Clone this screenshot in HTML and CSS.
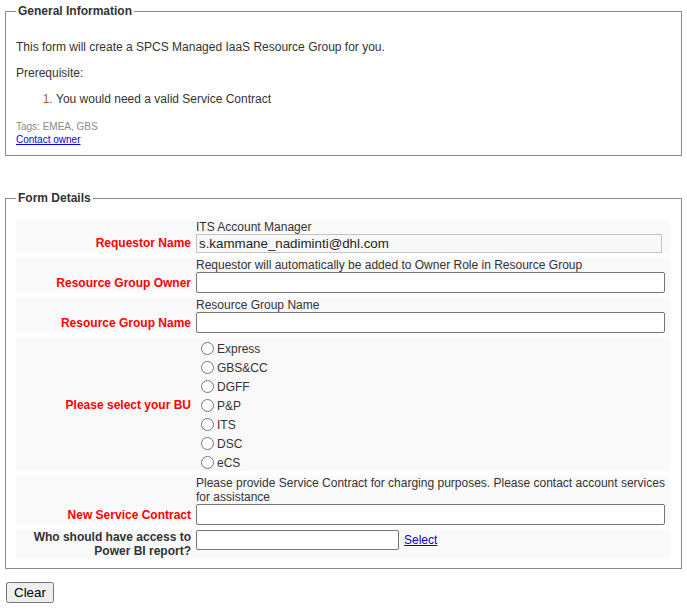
FILE: index.html
```html
<!DOCTYPE html>
<html>
<head>
<meta charset="utf-8">
<title>SPCS Managed IaaS Resource Group</title>
<link rel="stylesheet" href="styles.css">
</head>
<body>
<fieldset class="box box-info">
  <legend>General Information</legend>
  <p>This form will create a SPCS Managed IaaS Resource Group for you.</p>
  <p>Prerequisite:</p>
  <ol class="prereq">
    <li>You would need a valid Service Contract</li>
  </ol>
  <div class="tags">Tags: EMEA, GBS</div>
  <div class="contact"><a href="#">Contact owner</a></div>
</fieldset>

<fieldset class="box box-form">
  <legend>Form Details</legend>
  <div class="rows">
    <div class="row">
      <div class="lbl lbl-end"><span class="req lh19">Requestor Name</span></div>
      <div class="val">
        <div class="desc">ITS Account Manager</div>
        <input class="field field-ro" type="text" value="s.kammane_nadiminti@dhl.com" readonly>
      </div>
    </div>
    <div class="row">
      <div class="lbl lbl-end"><span class="req lh21">Resource Group Owner</span></div>
      <div class="val">
        <div class="desc">Requestor will automatically be added to Owner Role in Resource Group</div>
        <input class="field" type="text">
      </div>
    </div>
    <div class="row">
      <div class="lbl lbl-end"><span class="req lh21">Resource Group Name</span></div>
      <div class="val">
        <div class="desc">Resource Group Name</div>
        <input class="field" type="text">
      </div>
    </div>
    <div class="row row-bu">
      <div class="lbl lbl-mid"><span class="req">Please select your BU</span></div>
      <div class="val options">
        <label class="opt"><input type="radio" name="bu"><span>Express</span></label>
        <label class="opt"><input type="radio" name="bu"><span>GBS&amp;CC</span></label>
        <label class="opt"><input type="radio" name="bu"><span>DGFF</span></label>
        <label class="opt"><input type="radio" name="bu"><span>P&amp;P</span></label>
        <label class="opt"><input type="radio" name="bu"><span>ITS</span></label>
        <label class="opt"><input type="radio" name="bu"><span>DSC</span></label>
        <label class="opt"><input type="radio" name="bu"><span>eCS</span></label>
      </div>
    </div>
    <div class="row">
      <div class="lbl lbl-end"><span class="req lh21">New Service Contract</span></div>
      <div class="val">
        <div class="desc">Please provide Service Contract for charging purposes. Please contact account services for assistance</div>
        <input class="field" type="text">
      </div>
    </div>
    <div class="row">
      <div class="lbl lbl-top"><span class="plain">Who should have access to Power BI report?</span></div>
      <div class="val val-inline">
        <input class="field field-short" type="text">
        <a class="select-link" href="#">Select</a>
      </div>
    </div>
  </div>
</fieldset>

<div class="actions">
  <button class="btn" type="button">Clear</button>
</div>
</body>
</html>
```

FILE: styles.css
```css
html, body {
  background: #ffffff;
}

body {
  margin: 4px 5px;
  font-family: Arial, "Liberation Sans", sans-serif;
  font-size: 12px;
  line-height: 14px;
  color: #333333;
}

.box {
  margin: 0;
  border: 1px solid #8a8a8a;
  min-width: 0;
}

.box legend {
  padding: 0 2px;
  font-weight: bold;
  font-size: 12px;
  line-height: 14px;
  color: #333333;
}

.box-info {
  padding: 10px 10px 9px 10px;
}

.box-info p {
  margin: 12px 0;
}

.prereq {
  margin: 12px 0 14px;
  padding-left: 40px;
}

.prereq li::marker {
  color: #a8622a;
}

.tags {
  font-size: 10px;
  line-height: 13px;
  color: #8a8a8a;
}

.contact {
  font-size: 10px;
  line-height: 13px;
}

.contact a {
  color: #0000ee;
}

.box-form {
  margin-top: 35px;
  padding: 15px 11px 10px 10px;
}

.rows {
  display: flex;
  flex-direction: column;
  gap: 5px;
}

.row {
  display: grid;
  grid-template-columns: 175px 1fr;
  column-gap: 5px;
  background: #f9f9f9;
}

.row-bu {
  height: 133px;
}

.lbl {
  display: flex;
  justify-content: flex-end;
  text-align: right;
  font-weight: bold;
}

.lbl-end {
  align-items: flex-end;
}

.lbl-mid {
  align-items: center;
}

.lbl-top {
  align-items: flex-start;
}

.req {
  color: #ff0000;
}

.plain {
  color: #333333;
}

.lh19 {
  line-height: 19px;
}

.lh21 {
  line-height: 20px;
}

.val {
  display: flex;
  flex-direction: column;
  align-items: flex-start;
  min-width: 0;
}

.desc {
  line-height: 14px;
  color: #333333;
}

.field {
  box-sizing: border-box;
  width: 469px;
  height: 21px;
  margin: 0;
  padding: 1px 2px;
  border: 1px solid #767676;
  border-radius: 2px;
  background: #ffffff;
  font-family: Arial, "Liberation Sans", sans-serif;
  font-size: 13.333px;
  color: #222222;
}

.field-ro {
  width: 466px;
  height: 19px;
  border-color: #c4c4c4;
  border-radius: 0;
  background: #f8f8f8;
}

.field-short {
  width: 203px;
  height: 20px;
}

.val-inline {
  flex-direction: row;
  align-items: center;
  align-self: start;
  gap: 5px;
}

.select-link {
  color: #0000ee;
  font-size: 12px;
}

.options {
  padding-top: 1px;
}

.opt {
  display: flex;
  align-items: center;
  height: 19px;
  color: #333333;
}

.opt input {
  width: 13px;
  height: 13px;
  margin: 0 3px 0 5px;
}

.actions {
  margin-top: 13px;
  padding-left: 1px;
}

.btn {
  margin: 0;
  padding: 1px 6px;
  font-family: Arial, "Liberation Sans", sans-serif;
  font-size: 13.333px;
  line-height: 15px;
  color: #000000;
}
```
